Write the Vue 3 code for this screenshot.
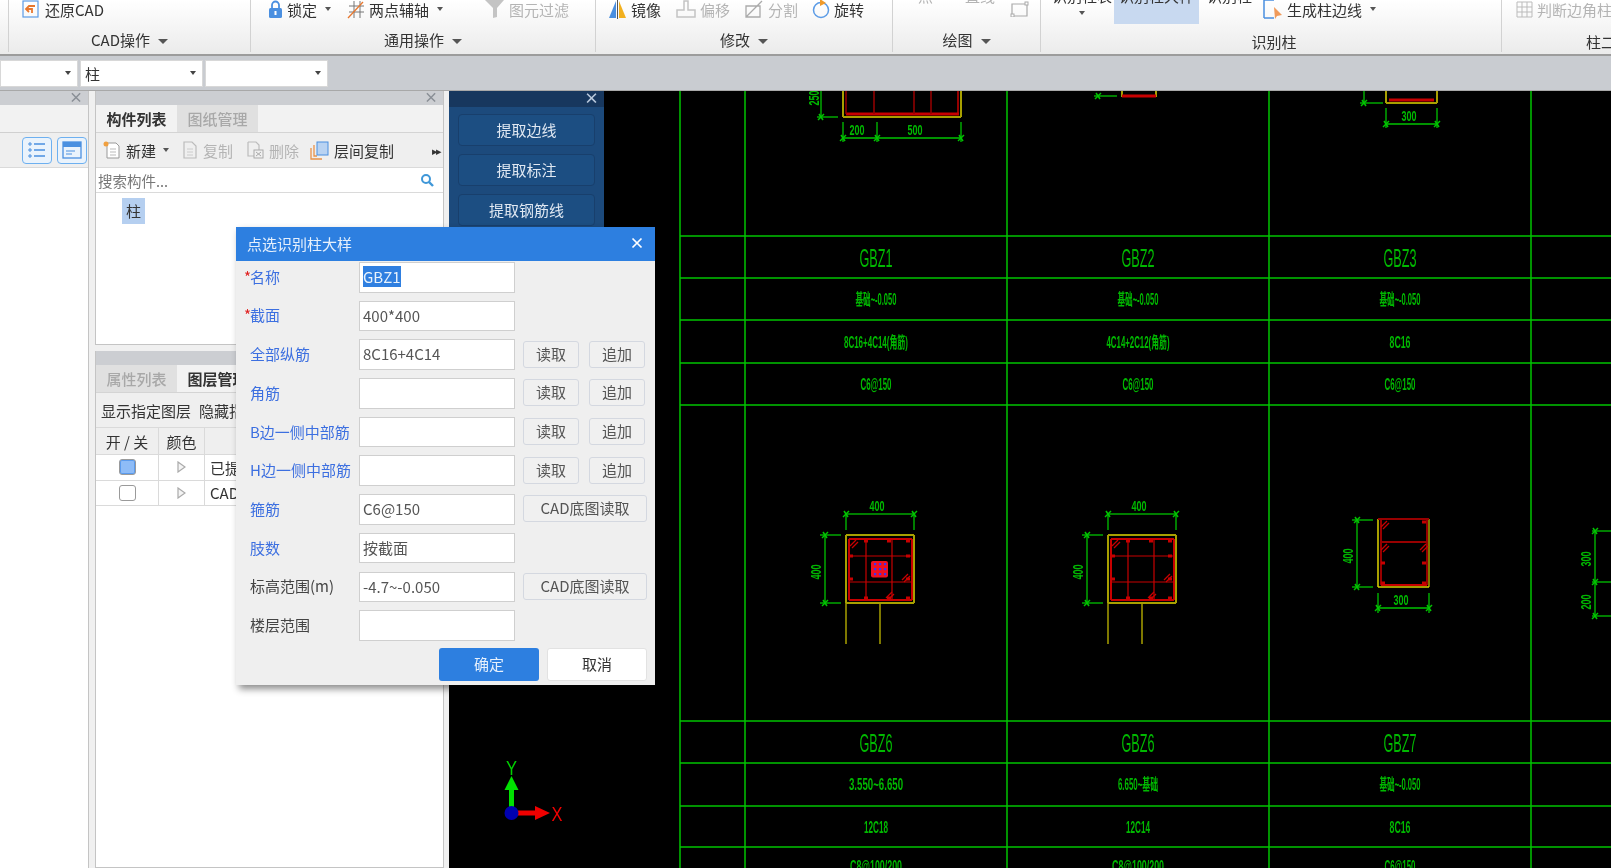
<template>
  <div class="app">
    <div class="ribbon">
      <div class="group g0"></div>

      <div class="group g1">
        <div class="tools">
          <div class="tool">
            <svg width="20" height="19" viewBox="0 0 20 19"><rect x="2" y="1" width="15" height="16" fill="none" stroke="#5b9be6" stroke-width="1.2"/><path d="M14 6H8L5 9l3 3M5 9h6v4" fill="none" stroke="#e8772e" stroke-width="1.8"/></svg>
            <span>还原CAD</span>
          </div>
        </div>
        <div class="glabel">CAD操作<i class="caret"></i></div>
      </div>

      <div class="group g2">
        <div class="tools">
          <div class="tool">
            <svg width="15" height="19" viewBox="0 0 15 19"><path d="M4 9V5a3.500 3.500 0 0 1 7 0v4" fill="none" stroke="#4a8fe0" stroke-width="1.8"/><rect x="1" y="8" width="13" height="10" rx="1.500" fill="#4a8fe0"/><rect x="6.500" y="11" width="2" height="4" fill="#fff"/></svg>
            <span>锁定</span><i class="caret small"></i>
          </div>
          <div class="tool">
            <svg width="18" height="19" viewBox="0 0 18 19"><path d="M7 1v17M13 1v17M2 6h15M2 12h15" stroke="#777" stroke-width="1" fill="none"/><path d="M1 18L16 2" stroke="#e8772e" stroke-width="1.300"/></svg>
            <span>两点辅轴</span><i class="caret small"></i>
          </div>
          <div class="tool off">
            <svg width="20" height="19" viewBox="0 0 20 19"><path d="M0 0h19l-7 8v9l-4 1V8z" fill="#c4c4c4"/></svg>
            <span>图元过滤</span>
          </div>
        </div>
        <div class="glabel">通用操作<i class="caret"></i></div>
      </div>

      <div class="group g3">
        <div class="tools">
          <div class="tool">
            <svg width="19" height="19" viewBox="0 0 19 19"><path d="M8 1v17H1z" fill="#4a8fe0"/><path d="M11 1v17h7z" fill="#f2b01e"/><path d="M9.500 0v19" stroke="#555"/></svg>
            <span>镜像</span>
          </div>
          <div class="tool off">
            <svg width="20" height="19" viewBox="0 0 20 19"><path d="M8 1h4v9h7v7H1v-7h7z" fill="none" stroke="#c4c4c4" stroke-width="1.500"/></svg>
            <span>偏移</span>
          </div>
          <div class="tool off">
            <svg width="20" height="19" viewBox="0 0 20 19"><path d="M2 6h14v11H2zM2 17L18 1" fill="none" stroke="#aaa" stroke-width="1.300"/></svg>
            <span>分割</span>
          </div>
          <div class="tool">
            <svg width="18" height="21" viewBox="0 0 18 21"><circle cx="9" cy="11" r="7.500" fill="none" stroke="#5b9be6" stroke-width="1.500"/><path d="M8 0l6 4-6 3z" fill="#f09a2a"/></svg>
            <span>旋转</span>
          </div>
        </div>
        <div class="glabel">修改<i class="caret"></i></div>
      </div>

      <div class="group g4">
        <div class="tools">
          <div class="tool off cut"><span>点</span></div>
          <div class="tool off cut"><span>直线</span></div>
          <div class="tool">
            <svg width="19" height="16" viewBox="0 0 19 16"><path d="M2 3h15v12H2z" fill="none" stroke="#aaa" stroke-width="1.200"/><rect x="15" y="1" width="3" height="3" fill="#fff" stroke="#aaa"/><rect x="1" y="13" width="3" height="3" fill="#fff" stroke="#aaa"/></svg>
          </div>
        </div>
        <div class="glabel">绘图<i class="caret"></i></div>
      </div>

      <div class="group g5">
        <div class="tools">
          <div class="tool cut stack"><span>识别柱表</span><i class="caret small"></i></div>
          <div class="tool active"><span>识别柱大样</span></div>
          <div class="tool cut"><span>识别柱</span></div>
          <div class="tool">
            <svg width="20" height="20" viewBox="0 0 20 20"><path d="M1 1h10M1 1v18M1 19h10" stroke="#4a8fe0" stroke-width="1.500" fill="none"/><path d="M11 8l8 8-5 1-2 3z" fill="#f09a5a"/></svg>
            <span>生成柱边线</span><i class="caret small"></i>
          </div>
        </div>
        <div class="glabel low">识别柱</div>
      </div>

      <div class="group g6">
        <div class="tools">
          <div class="tool off">
            <svg width="17" height="17" viewBox="0 0 17 17"><path d="M1 1h15v15H1zM1 6h15M1 11h15M6 1v15M11 1v15" fill="none" stroke="#bbb"/></svg>
            <span>判断边角柱</span>
          </div>
        </div>
        <div class="glabel low">柱二次编辑</div>
      </div>
    </div>

    <div class="combobar">
      <div class="combo first"><i class="caret small"></i></div>
      <div class="combo second"><span>柱</span><i class="caret small"></i></div>
      <div class="combo third"><i class="caret small"></i></div>
    </div>

    <div class="workspace">
      <div class="side">
        <div class="phead"><span class="px">×</span></div>
        <div class="side-blank"></div>
        <div class="side-tools">
          <div class="viewbtn">
            <svg width="18" height="16" viewBox="0 0 18 16"><path d="M6 2h11M6 8h11M6 14h11" stroke="#4a90e0" stroke-width="1.300"/><path d="M1 1h2v2H1zM1 7h2v2H1zM1 13h2v2H1z" fill="none" stroke="#4a90e0"/></svg>
          </div>
          <div class="viewbtn">
            <svg width="20" height="18" viewBox="0 0 20 18"><rect x="1" y="1" width="18" height="16" fill="none" stroke="#4a90e0" stroke-width="1.300"/><rect x="1" y="1" width="18" height="5" fill="#4a90e0"/><path d="M4 10h9M4 13h6" stroke="#4a90e0"/></svg>
          </div>
        </div>
        <div class="side-body"></div>
      </div>

      <div class="mid">
        <div class="ppanel upper">
          <div class="phead"><span class="px">×</span></div>
          <div class="tabs">
            <div class="tab on">构件列表</div>
            <div class="tab">图纸管理</div>
          </div>
          <div class="ptools">
            <div class="ptool new">
              <svg width="18" height="18" viewBox="0 0 18 18"><path d="M4 2h9l3 3v12H4z" fill="#fff" stroke="#999"/><path d="M7 8h6M7 11h6M7 14h6" stroke="#bbb"/><circle cx="3" cy="3" r="2.500" fill="#f0a040"/></svg>
              <span>新建</span><i class="caret small"></i>
            </div>
            <div class="ptool copy off">
              <svg width="16" height="18" viewBox="0 0 16 18"><path d="M2 1h8l4 4v12H2z" fill="none" stroke="#bbb" stroke-width="1.200"/><path d="M5 8h6M5 11h6M5 14h6" stroke="#ccc"/></svg>
              <span>复制</span>
            </div>
            <div class="ptool del off">
              <svg width="18" height="18" viewBox="0 0 18 18"><path d="M2 1h8l3 3v5M2 1v14h6" fill="none" stroke="#bbb" stroke-width="1.200"/><rect x="8" y="9" width="9" height="8" fill="none" stroke="#aaa"/><path d="M10 11l5 4M15 11l-5 4" stroke="#aaa"/></svg>
              <span>删除</span>
            </div>
            <div class="ptool">
              <svg width="19" height="19" viewBox="0 0 19 19"><path d="M1 7v11h11M4 4v11h3" fill="none" stroke="#e8924a" stroke-width="1.300"/><rect x="7" y="1" width="11" height="13" fill="#b9d3f2" stroke="#4a8fe0"/></svg>
              <span>层间复制</span>
            </div>
            <span class="more">▸▸</span>
          </div>
          <div class="search">
            <span>搜索构件...</span>
            <svg width="14" height="14" viewBox="0 0 14 14"><circle cx="6" cy="6" r="4" fill="none" stroke="#3f97d8" stroke-width="2"/><path d="M9 9l4 4" stroke="#3f97d8" stroke-width="2.400"/></svg>
          </div>
          <div class="plist"><span class="pick">柱</span></div>
        </div>

        <div class="ppanel lower">
          <div class="phead"></div>
          <div class="tabs">
            <div class="tab">属性列表</div>
            <div class="tab on">图层管理</div>
          </div>
          <div class="ptools layer-tools">
            <span>显示指定图层</span>
            <span>隐藏指定图层</span>
          </div>
          <div class="ltable">
            <div class="lrow lhead">
              <div class="c1">开 / 关</div><div class="c2">颜色</div><div class="c3"></div>
            </div>
            <div v-for="layer in layers" :key="layer.name" class="lrow">
              <div class="c1"><span class="check" :class="{ checked: layer.on }"></span></div>
              <div class="c2">
                <svg width="9" height="12" viewBox="0 0 9 12"><path d="M1 1l7 5-7 5z" fill="#f4f4f4" stroke="#aaa" stroke-width="1.200"/></svg>
              </div>
              <div class="c3 name">{{ layer.name }}</div>
            </div>
          </div>
        </div>
      </div>

      <div class="canvas">
        <svg class="cad" width="1162" height="777" viewBox="449 91 1162 777">
          <line v-for="(l, i) in lines" :key="i" :x1="l.x1" :y1="l.y1" :x2="l.x2" :y2="l.y2" :stroke="l.c" :stroke-width="l.w" />
          <g v-for="(s, i) in notes" :key="'s' + i">
            <text :x="s.x" :y="s.y" :font-size="s.size" :font-weight="s.bold ? 700 : 400" :textLength="s.w" lengthAdjust="spacingAndGlyphs" text-anchor="middle" dominant-baseline="central" fill="#00b800" :transform="s.rot ? `rotate(-90 ${s.x} ${s.y})` : null">{{ s.t }}</text>
          </g>
          <!-- centre pier of the first section -->
          <rect x="871" y="561" width="17" height="16.500" rx="2" fill="#f01020" />
          <g v-for="cx in [875, 880, 885]" :key="cx">
            <rect v-for="cy in [564, 569, 574]" :key="cy" :x="cx - 1" :y="cy - 1" width="2.200" height="2.200" fill="#4030f0" />
          </g>
          <!-- axis -->
          <line x1="511.500" y1="813" x2="511.500" y2="788" stroke="#00e000" stroke-width="5" />
          <path d="M511.500 776l7 14h-14z" fill="#00e000" />
          <line x1="511.500" y1="813" x2="537" y2="813" stroke="#f00000" stroke-width="5" />
          <path d="M550 813l-15 -7v14z" fill="#f00000" />
          <circle cx="511.500" cy="813" r="7" fill="#0000b0" />
          <text x="511.500" y="768" font-size="20" textLength="11" lengthAdjust="spacingAndGlyphs" text-anchor="middle" dominant-baseline="central" fill="#00d000">Y</text>
          <text x="557" y="814" font-size="20" textLength="11" lengthAdjust="spacingAndGlyphs" text-anchor="middle" dominant-baseline="central" fill="#f00000">X</text>
        </svg>

        <div class="floatpanel">
          <div class="fhead"><span class="fx">×</span></div>
          <div v-for="b in pickButtons" :key="b" class="fbtn">{{ b }}</div>
        </div>
      </div>
    </div>

    <div class="dialog">
      <div class="dtitle">
        <span>点选识别柱大样</span>
        <svg width="12" height="12" viewBox="0 0 12 12"><path d="M1.500 1.500l9 9M10.500 1.500l-9 9" stroke="#fff" stroke-width="1.700"/></svg>
      </div>
      <div class="dbody">
        <div v-for="f in fields" :key="f.label" class="frow">
          <div class="flabel" :class="{ plain: f.plain }"><span class="star">{{ f.required ? '*' : '' }}</span>{{ f.label }}</div>
          <div class="finput"><span :class="{ sel: f.selected }">{{ f.value }}</span></div>
          <template v-if="f.btns === 'pair'">
            <div class="dbtn small-btn">读取</div>
            <div class="dbtn small-btn">追加</div>
          </template>
          <div v-else-if="f.btns === 'cad'" class="dbtn cad-btn">CAD底图读取</div>
        </div>
      </div>
      <div class="dfoot">
        <div class="okbtn">确定</div>
        <div class="nobtn">取消</div>
      </div>
    </div>
  </div>
</template>

<script setup>
const layers = [
  { name: '已提取的CAD图层', on: true },
  { name: 'CAD原始图层', on: false }
]

const pickButtons = ['提取边线', '提取标注', '提取钢筋线', '自动识别']

const fields = [
  { label: '名称', value: 'GBZ1', required: true, selected: true },
  { label: '截面', value: '400*400', required: true },
  { label: '全部纵筋', value: '8C16+4C14', btns: 'pair' },
  { label: '角筋', value: '', btns: 'pair' },
  { label: 'B边一侧中部筋', value: '', btns: 'pair' },
  { label: 'H边一侧中部筋', value: '', btns: 'pair' },
  { label: '箍筋', value: 'C6@150', btns: 'cad' },
  { label: '肢数', value: '按截面' },
  { label: '标高范围(m)', value: '-4.7~-0.050', btns: 'cad', plain: true },
  { label: '楼层范围', value: '', plain: true }
]

const GREEN = '#00c400'
const DIM = '#00a800'
const RED = '#c80000'
const DARKRED = '#980000'
const YELLOW = '#a8a000'

const lines = []
const line = (x1, y1, x2, y2, c = GREEN, w = 1.5) => lines.push({ x1, y1, x2, y2, c, w })
const tick = (x, y) => {
  line(x - 3, y + 3, x + 3, y - 3, GREEN, 1.5)
  line(x - 2, y - 3, x + 2, y + 3, GREEN, 1.5)
}

// table grid
const cols = [680, 745, 1007, 1269, 1531]
cols.forEach((x) => line(x, 91, x, 868))
;[236, 278, 320, 363, 405, 721, 763, 806, 847].forEach((y) => line(680, y, 1611, y))

// hook marks along a stirrup
const rebar = (x, y) => line(x - 2, y, x + 2, y, RED, 3)
const hook = (x, y) => {
  line(x, y + 6, x + 6, y, RED, 1.2)
  line(x + 2, y + 8, x + 8, y + 2, RED, 1.2)
}

// the two square sections, second one shifted one column
;[0, 262].forEach((dx) => {
  const x = 846 + dx
  line(x, 535, x + 68, 535, YELLOW, 2)
  line(x, 535, x, 603, YELLOW, 2)
  line(x + 68, 535, x + 68, 603, YELLOW, 2)
  line(x, 603, x + 68, 603, YELLOW, 2)
  line(x + 3, 539, x + 66, 539, RED, 2)
  line(x + 3, 600, x + 66, 600, RED, 2)
  line(x + 3, 539, x + 3, 600, RED, 2)
  line(x + 66, 539, x + 66, 600, RED, 2)
  line(x + 20, 539, x + 20, 600, RED, 1.2)
  line(x + 46, 539, x + 46, 600, RED, 1.2)
  line(x + 3, 556, x + 66, 556, RED, 1.2)
  line(x + 3, 582, x + 66, 582, RED, 1.2)
  ;[20, 43, 62].forEach((o) => { rebar(x + o, 541); rebar(x + o, 598) })
  ;[556, 579].forEach((y) => { rebar(x + 5, y); rebar(x + 62, y) })
  hook(x + 4, 540)
  hook(x + 56, 574)
  hook(x + 40, 592)
  // dims
  line(x, 514, x + 68, 514, DIM)
  line(x, 514, x, 530, DIM)
  line(x + 68, 514, x + 68, 530, DIM)
  tick(x, 514)
  tick(x + 68, 514)
  line(x - 21, 535, x - 21, 603, DIM)
  line(x - 26, 535, x - 5, 535, DIM)
  line(x - 26, 603, x - 5, 603, DIM)
  tick(x - 21, 535)
  tick(x - 21, 603)
  // legs
  line(x, 603, x, 644, YELLOW, 1.5)
  line(x + 34, 603, x + 34, 644, YELLOW, 1.5)
})

// narrow section in the third column
line(1378, 519, 1378, 587, YELLOW, 2)
line(1429, 519, 1429, 587, YELLOW, 1.5)
line(1378, 587, 1429, 587, '#d8d000', 1.5)
line(1378, 519, 1429, 519, DARKRED, 2)
line(1381, 520, 1381, 585, DARKRED, 2)
line(1427, 520, 1427, 585, DARKRED, 2)
line(1381, 542, 1427, 542, DARKRED, 2)
line(1381, 585, 1427, 585, RED, 2)
hook(1381, 521)
hook(1381, 544)
hook(1420, 544)
;[563, 583].forEach((y) => { rebar(1383, y); rebar(1424, y) })
rebar(1424, 522)
line(1357, 520, 1357, 587, DIM)
line(1352, 520, 1373, 520, DIM)
line(1352, 587, 1373, 587, DIM)
tick(1357, 520)
tick(1357, 587)
line(1378, 608, 1429, 608, GREEN)
line(1378, 593, 1378, 613, DIM)
line(1429, 593, 1429, 613, DIM)
tick(1378, 608)
tick(1429, 608)

// far right dims, cut by the window edge
line(1595, 531, 1595, 616, DIM)
;[531, 582, 616].forEach((y) => { line(1592, y, 1611, y, DIM); tick(1595, y) })

// sections cut at the top of the view
line(843, 91, 843, 117, YELLOW, 2)
line(961, 91, 961, 117, YELLOW, 2)
line(843, 117, 961, 117, YELLOW, 2)
line(846, 114, 959, 114, RED, 3)
line(846, 91, 846, 114, DARKRED, 1.5)
line(874, 91, 874, 114, DARKRED, 1.5)
line(914, 91, 914, 114, DARKRED, 1.5)
line(931, 91, 931, 114, DARKRED, 1.5)
line(958, 91, 958, 114, RED, 1.5)
line(821, 91, 821, 117, DIM)
line(817, 117, 838, 117, DIM)
tick(821, 117)
line(843, 138, 961, 138, GREEN)
line(843, 122, 843, 142, DIM)
line(877, 122, 877, 142, DIM)
line(961, 122, 961, 142, DIM)
tick(843, 138)
tick(877, 138)
tick(961, 138)

line(1122, 91, 1122, 97, YELLOW, 2)
line(1156, 91, 1156, 97, YELLOW, 2)
line(1122, 96, 1156, 96, RED, 3)
line(1094, 96, 1117, 96, DIM)
tick(1098, 96)

line(1386, 91, 1386, 103, YELLOW, 2)
line(1437, 91, 1437, 103, YELLOW, 2)
line(1386, 103, 1437, 103, YELLOW, 2)
line(1389, 100, 1434, 100, RED, 3)
line(1364, 91, 1364, 103, DIM)
line(1360, 103, 1383, 103, DIM)
tick(1364, 103)
line(1386, 124, 1437, 124, GREEN)
line(1386, 108, 1386, 128, DIM)
line(1437, 108, 1437, 128, DIM)
tick(1386, 124)
tick(1437, 124)

const title = (x, y, t) => ({ x, y, t, size: 25, w: 33 })
const small = (x, y, t, w) => ({ x, y, t, size: 16, w, bold: true })
const dim = (x, y, t, rot = false) => ({ x, y, t, size: 14, w: 15, rot, bold: true })

const notes = [
  title(876, 258, 'GBZ1'), title(1138, 258, 'GBZ2'), title(1400, 258, 'GBZ3'),
  small(876, 299, '基础~-0.050', 41), small(1138, 299, '基础~-0.050', 41), small(1400, 299, '基础~-0.050', 41),
  small(876, 342, '8C16+4C14(角筋)', 64), small(1138, 342, '4C14+2C12(角筋)', 63), small(1400, 342, '8C16', 21),
  small(876, 384, 'C6@150', 31), small(1138, 384, 'C6@150', 31), small(1400, 384, 'C6@150', 31),
  title(876, 743, 'GBZ6'), title(1138, 743, 'GBZ6'), title(1400, 743, 'GBZ7'),
  small(876, 784, '3.550~6.650', 54), small(1138, 784, '6.650~基础', 40), small(1400, 784, '基础~-0.050', 41),
  small(876, 827, '12C18', 24), small(1138, 827, '12C14', 24), small(1400, 827, '8C16', 21),
  small(876, 866, 'C8@100/200', 52), small(1138, 866, 'C8@100/200', 52), small(1400, 866, 'C6@150', 31),
  dim(877, 506, '400'), dim(1139, 506, '400'), dim(1401, 600, '300'),
  dim(816, 572, '400', true), dim(1078, 572, '400', true), dim(1348, 556, '400', true),
  dim(1586, 559, '300', true), dim(1586, 602, '200', true),
  dim(814, 98, '250', true), dim(857, 130, '200'), dim(915, 130, '500'), dim(1409, 116, '300')
]
</script>

<style>
html,
body {
  margin: 0;
  background: #f0f0f0;
}
</style>

<style scoped>
.app {
  position: relative;
  width: 1611px;
  height: 868px;
  overflow: hidden;
  display: flex;
  flex-direction: column;
  font-family: "Noto Sans CJK SC", "Noto Sans", sans-serif;
  font-size: 15px;
  color: #333;
  filter: blur(0.4px);
}

.caret {
  display: inline-block;
  width: 0;
  height: 0;
  border-left: 5px solid transparent;
  border-right: 5px solid transparent;
  border-top: 5px solid #555;
  margin-left: 8px;
  vertical-align: middle;
}

.caret.small {
  border-left-width: 3.5px;
  border-right-width: 3.5px;
  border-top-width: 4px;
}

.ribbon {
  display: flex;
  height: 56px;
  flex: none;
  overflow: hidden;
  background: linear-gradient(#ffffff, #ebebeb);
  border-bottom: 2px solid #9c9c9c;
  box-sizing: border-box;
}

.group {
  height: 52px;
  box-sizing: border-box;
  border-right: 1px solid #d2d2d2;
  flex: none;
}

.tools {
  display: grid;
  grid-template-rows: 22px;
  height: 22px;
  margin-top: -2px;
  align-items: center;
}

.tool {
  display: flex;
  align-items: center;
  gap: 4px;
  white-space: nowrap;
  height: 22px;
}

.tool .caret {
  margin-left: 4px;
}

.off {
  color: #b4b4b4;
}

.cut {
  position: relative;
  top: -14px;
}

.glabel {
  text-align: center;
  line-height: 22px;
  margin-top: 9px;
}

.glabel.low {
  margin-top: 11px;
}

.g0 { width: 9px; }
.g1 { width: 242px; }
.g1 .tools { padding-left: 12px; grid-template-columns: auto; }
.g2 { width: 345px; }
.g2 .tools { padding-left: 17px; grid-template-columns: 79px 138px auto; }
.g3 { width: 297px; }
.g3 .tools { padding-left: 12px; grid-template-columns: 68px 68px 68px auto; }
.g4 { width: 148px; }
.g4 .tools { padding-left: 25px; grid-template-columns: 47px 45px auto; }
.g5 { width: 461px; }
.g5 .tools { padding-left: 11px; grid-template-columns: 62px 93px 56px auto; }
.g5 .glabel { padding-left: 6px; }
.g6 { width: 109px; border-right: 0; }
.g6 .tools { padding-left: 14px; }
.g6 .glabel { text-align: left; padding-left: 84px; white-space: nowrap; }

.g5 .stack {
  display: block;
  height: auto;
}

.g5 .stack .caret {
  position: absolute;
  left: 27px;
  top: 26px;
  margin: 0;
}

.g5 .active {
  margin-top: 2px;
  align-self: start;
  width: 85px;
  height: 24px;
  background: #c8d9f0;
  display: block;
  text-align: center;
  overflow: hidden;
}

.g5 .active span {
  display: block;
  margin-top: -15px;
  line-height: 22px;
}

.combobar {
  height: 35px;
  flex: none;
  background: #c9ccd1;
  display: flex;
  align-items: center;
  gap: 2px;
  border-bottom: 1px solid #a8a8a8;
  box-sizing: border-box;
}

.combo {
  height: 27px;
  background: #fff;
  border: 1px solid #d8d8d8;
  box-sizing: border-box;
  display: flex;
  align-items: center;
  justify-content: space-between;
  padding: 0 6px 0 4px;
}

.combo.first { width: 78px; justify-content: flex-end; }
.combo.second { width: 123px; }
.combo.third { width: 123px; justify-content: flex-end; }
.combo .caret { margin: 0; border-top-color: #444; }

.workspace {
  flex: 1;
  display: flex;
  min-height: 0;
  background: #f0f0f0;
}

.phead {
  height: 14px;
  background: #ccced2;
  position: relative;
  flex: none;
}

.px {
  position: absolute;
  right: 5px;
  top: -5px;
  font-size: 14px;
  font-weight: 700;
  color: #8a8f96;
}

.side {
  width: 89px;
  flex: none;
  display: flex;
  flex-direction: column;
  background: #fff;
  border-right: 1px solid #c4c4c4;
  box-sizing: border-box;
}

.side-blank {
  height: 27px;
  background: #f2f2f2;
  border-bottom: 1px solid #d0d0d0;
}

.side-tools {
  height: 35px;
  background: #efefef;
  border-bottom: 1px solid #dadada;
  box-sizing: border-box;
  display: flex;
  align-items: center;
  justify-content: flex-end;
  gap: 5px;
  padding-right: 1px;
}

.viewbtn {
  width: 30px;
  height: 27px;
  border: 1px solid #6db0f0;
  border-radius: 4px;
  background: #eaf3fc;
  display: flex;
  align-items: center;
  justify-content: center;
  box-sizing: border-box;
}

.side-body {
  flex: 1;
}

.mid {
  width: 349px;
  margin: 0 5px 0 6px;
  flex: none;
  display: flex;
  flex-direction: column;
  gap: 6px;
}

.ppanel {
  background: #fff;
  border: 1px solid #c4c4c4;
  border-width: 0 1px 1px 1px;
  box-sizing: border-box;
  display: flex;
  flex-direction: column;
}

.upper { height: 254px; }
.lower { flex: 1; }

.tabs {
  display: flex;
  height: 27px;
  flex: none;
  background: #f2f2f2;
  border-bottom: 1px solid #d4d4d4;
}

.tab {
  width: 81px;
  text-align: center;
  line-height: 27px;
  font-weight: 500;
  color: #a8a8a8;
  background: #e0e0e0;
}

.tab.on {
  color: #333;
  background: #f2f2f2;
  font-weight: 700;
}

.ptools {
  height: 34px;
  flex: none;
  display: flex;
  align-items: center;
  background: #efefef;
  border-bottom: 1px solid #dadada;
  position: relative;
  padding-left: 7px;
}

.ptool {
  display: flex;
  align-items: center;
  gap: 5px;
  white-space: nowrap;
}

.ptool .caret { margin-left: 2px; }
.new { width: 79px; }
.copy { width: 64px; }
.del { width: 64px; }

.more {
  position: absolute;
  right: 3px;
  font-size: 11px;
  letter-spacing: -2px;
  color: #333;
}

.search {
  height: 24px;
  flex: none;
  display: flex;
  align-items: center;
  justify-content: space-between;
  padding: 0 9px 0 2px;
  color: #777;
  border-bottom: 1px solid #dadada;
  font-size: 14.5px;
}

.plist {
  padding: 5px 0 0 26px;
}

.pick {
  display: block;
  width: 23px;
  height: 26px;
  line-height: 26px;
  text-align: center;
  background: #b5cff0;
}

.layer-tools {
  gap: 8px;
  padding-left: 5px;
  white-space: nowrap;
  overflow: hidden;
}

.lrow {
  display: flex;
  height: 25.500px;
  border-bottom: 1px solid #dadada;
  box-sizing: border-box;
  align-items: center;
}

.lhead {
  height: 27px;
  background: #efefef;
}

.c1, .c2 {
  height: 100%;
  border-right: 1px solid #dadada;
  box-sizing: border-box;
  display: flex;
  align-items: center;
  justify-content: center;
  flex: none;
}

.c1 { width: 63px; }
.c2 { width: 46px; }
.c3 { padding-left: 5px; white-space: nowrap; }

.check {
  width: 17px;
  height: 16px;
  border: 1.5px solid #9a9a9a;
  border-radius: 3px;
  background: #fff;
  box-sizing: border-box;
}

.check.checked {
  background: #8ebcf7;
  box-shadow: inset 0 0 0 1px #5a9bee;
}

.canvas {
  flex: 1;
  background: #000;
  position: relative;
  overflow: hidden;
  min-width: 0;
}

.cad {
  display: block;
  font-family: "Liberation Sans", "Noto Sans CJK SC", sans-serif;
}

.floatpanel {
  position: absolute;
  left: 0;
  top: 0;
  width: 155px;
  height: 300px;
  background: #1c4a7c;
  display: flex;
  flex-direction: column;
  align-items: center;
  gap: 8px;
}

.fhead {
  height: 16px;
  width: 100%;
  background: #17375e;
  position: relative;
  margin-bottom: -1px;
}

.fx {
  position: absolute;
  right: 5px;
  top: -4px;
  font-size: 15px;
  font-weight: 700;
  color: #b8c8dc;
}

.fbtn {
  width: 137px;
  height: 32px;
  line-height: 30px;
  box-sizing: border-box;
  text-align: center;
  color: #e0e8f2;
  background: #1c4e82;
  border: 1px solid #183f6c;
  border-radius: 4px;
}

.dialog {
  position: absolute;
  left: 236px;
  top: 227px;
  width: 419px;
  height: 458px;
  background: #efefef;
  box-shadow: 3px 4px 7px rgba(0, 0, 0, 0.45);
  display: flex;
  flex-direction: column;
}

.dtitle {
  height: 34px;
  flex: none;
  background: #2d7fe0;
  color: #e6f0fc;
  display: flex;
  align-items: center;
  justify-content: space-between;
  padding: 0 12px 2px 11px;
  box-sizing: border-box;
}

.dbody {
  display: grid;
  grid-auto-rows: 30.500px;
  row-gap: 8.200px;
  margin-top: 1px;
}

.frow {
  display: flex;
  align-items: center;
}

.flabel {
  width: 123px;
  flex: none;
  box-sizing: border-box;
  padding: 0 0 2px 8px;
  color: #3c6fe0;
  white-space: nowrap;
}

.flabel.plain {
  color: #444;
}

.star {
  display: inline-block;
  width: 6px;
  color: #e02020;
}

.finput {
  width: 156px;
  height: 100%;
  flex: none;
  box-sizing: border-box;
  background: #fff;
  border: 1px solid #cfcfcf;
  padding-left: 3px;
  line-height: 27px;
  color: #555;
}

.sel {
  background: #2f7fe0;
  color: #e8f2fc;
  display: inline-block;
  line-height: 21px;
}

.dbtn {
  height: 27px;
  line-height: 24px;
  box-sizing: border-box;
  text-align: center;
  background: #f0f0f0;
  border: 1px solid #d4d8e0;
  border-radius: 3px;
  color: #555;
  margin-top: -1px;
}

.small-btn {
  width: 56px;
  margin-left: 8px;
}

.small-btn + .small-btn {
  margin-left: 10px;
}

.cad-btn {
  width: 124px;
  margin-left: 8px;
}

.dfoot {
  display: flex;
  justify-content: flex-end;
  gap: 8px;
  margin-top: 7px;
  padding-right: 8px;
}

.okbtn,
.nobtn {
  width: 100px;
  height: 33px;
  line-height: 32px;
  text-align: center;
  border-radius: 3px;
  box-sizing: border-box;
}

.okbtn {
  background: #2d7fe0;
  color: #e6f0fc;
}

.nobtn {
  background: #fff;
  border: 1px solid #e2e2e2;
  line-height: 30px;
  color: #333;
}
</style>
